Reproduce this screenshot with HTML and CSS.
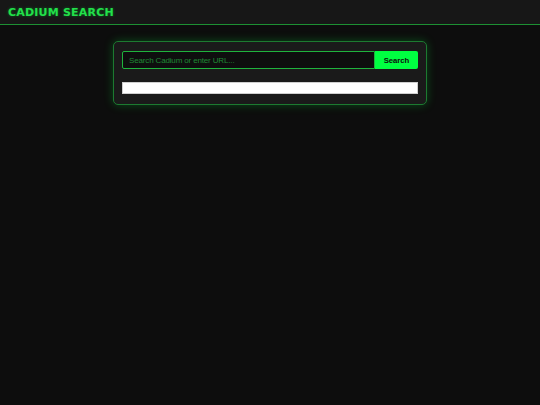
FILE: index.html
```html
<!DOCTYPE html>
<html lang="en">
<head>
<meta charset="utf-8">
<title>Cadium Search</title>
<link rel="stylesheet" href="styles.css">
</head>
<body>
<header class="topbar">
  <h1 class="brand">CADIUM SEARCH</h1>
</header>
<main class="main">
  <section class="panel">
    <form class="search-row">
      <input class="search-input" type="text" placeholder="Search Cadium or enter URL...">
      <button class="search-btn" type="button">Search</button>
    </form>
    <div class="results"></div>
  </section>
</main>
</body>
</html>
```

FILE: styles.css
```css
* { box-sizing: border-box; }
html, body {
  margin: 0;
  padding: 0;
  background: #0d0d0d;
  height: 100%;
}
body {
  font-family: "Liberation Sans", Arial, sans-serif;
  color: #00ff41;
}
.topbar {
  height: 25px;
  background: #171717;
  border-bottom: 1px solid #1d9033;
  display: flex;
  align-items: center;
  padding: 0 8px;
}
.brand {
  margin: 0;
  font-family: "DejaVu Sans", Verdana, sans-serif;
  font-size: 11px;
  font-weight: bold;
  letter-spacing: 0.2px;
  color: #22e04a;
  text-shadow: 0 0 3px rgba(0, 255, 65, 0.35);
}
.main {
  display: flex;
  justify-content: center;
  padding-top: 16px;
}
.panel {
  width: 314px;
  background: #1a1a1a;
  border: 1px solid #1c7a30;
  border-radius: 5px;
  padding: 9px 8px 10px;
  box-shadow: 0 0 10px rgba(0, 255, 65, 0.25);
}
.search-row {
  display: flex;
  margin: 0;
  height: 18px;
}
.search-input {
  flex: 1;
  min-width: 0;
  height: 18px;
  margin: 0;
  background: #0e0e0e;
  border: 1px solid #1fb33d;
  border-radius: 2px 0 0 2px;
  padding: 0 6px;
  font-family: "Liberation Sans", Arial, sans-serif;
  font-size: 8px;
  letter-spacing: -0.15px;
  color: #00ff41;
  outline: none;
}
.search-input::placeholder {
  color: #1f8a35;
}
.search-btn {
  width: 43px;
  height: 18px;
  margin: 0;
  background: #00ff41;
  border: none;
  border-radius: 0 2px 2px 0;
  font-family: "Liberation Sans", Arial, sans-serif;
  font-size: 7.7px;
  font-weight: bold;
  color: #0d0d0d;
  padding: 0;
}
.results {
  margin-top: 13px;
  height: 12px;
  background: #ffffff;
  border: 1px solid #cfcfcf;
}
```
